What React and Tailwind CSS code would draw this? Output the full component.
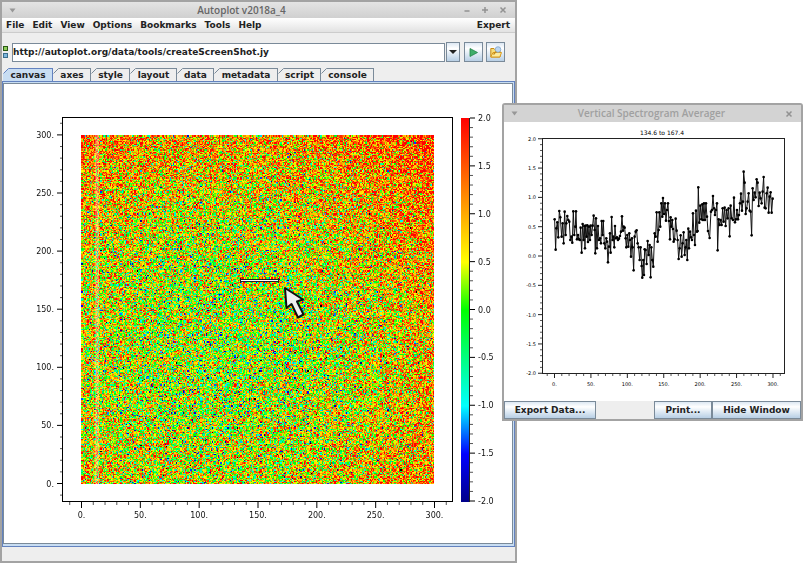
import React, { useLayoutEffect, useRef } from "react";

const STOPS = [
  [-2, 0, 0, 137],
  [-1.5, 0, 0, 255],
  [-1, 0, 255, 255],
  [0, 0, 255, 0],
  [0.5, 255, 255, 0],
  [2, 255, 0, 0],
];

function colorFor(v) {
  if (v < -2.2) return [0, 0, 0];
  if (v <= -2) return [0, 0, 137];
  for (let i = 1; i < STOPS.length; i++) {
    const a = STOPS[i - 1];
    const b = STOPS[i];
    if (v <= b[0]) {
      const t = (v - a[0]) / (b[0] - a[0]);
      return [1, 2, 3].map((k) => a[k] + (b[k] - a[k]) * t);
    }
  }
  return [255, 0, 0];
}

function makeRandom(seed) {
  let s = seed;
  return () => {
    s = (s + 0x6d2b79f5) | 0;
    let t = Math.imul(s ^ (s >>> 15), 1 | s);
    t = (t + Math.imul(t ^ (t >>> 7), 61 | t)) ^ t;
    return ((t ^ (t >>> 14)) >>> 0) / 4294967296;
  };
}

function Spectrogram() {
  const ref = useRef(null);
  useLayoutEffect(() => {
    const w = 353;
    const h = 349;
    const n = 300;
    const rnd = makeRandom(2018);
    const cells = [];
    for (let j = 0; j < n; j++) {
      for (let i = 0; i < n; i++) {
        const x = i / n - 0.4;
        const y = j / n - 0.62;
        const mean = 0.27 + 2 * (x * x + y * y);
        const g = Math.sqrt(-2 * Math.log(rnd() + 1e-9)) * Math.cos(2 * Math.PI * rnd());
        cells.push(colorFor(mean + g * 0.9));
      }
    }
    const ctx = ref.current.getContext("2d");
    const img = ctx.createImageData(w, h);
    for (let y = 0; y < h; y++) {
      for (let x = 0; x < w; x++) {
        const c = cells[Math.floor((y * n) / h) * n + Math.floor((x * n) / w)];
        const o = (y * w + x) * 4;
        img.data[o] = c[0];
        img.data[o + 1] = c[1];
        img.data[o + 2] = c[2];
        img.data[o + 3] = 255;
      }
    }
    ctx.putImageData(img, 0, 0);
    ctx.fillStyle = "rgba(255,255,255,0.28)";
    ctx.fillRect(14, 0, 4, h);
  }, []);
  return <canvas ref={ref} width="353" height="349" className="absolute left-[77px] top-[51px]" />;
}

const range = (a, b) => Array.from({ length: b - a + 1 }, (_, i) => a + i);

function MainPlot() {
  const px = (v) => 77.5 + v * 1.1767;
  const py = (v) => 399.5 - v * 1.162;
  const pz = (v) => 225.5 - v * 95.75;
  return (
    <div className="relative h-[459px] w-[507px]">
      <Spectrogram />
      <svg
        width="507"
        height="459"
        viewBox="0 0 507 459"
        className="relative block font-['DejaVu_Sans',sans-serif] text-[8px] font-normal"
        role="img"
        aria-label="Spectrogram with color bar"
      >
        <defs>
          <linearGradient id="bar" x1="0" y1="0" x2="0" y2="1">
            <stop offset="0" stopColor="#ff0000" />
            <stop offset="0.375" stopColor="#ffff00" />
            <stop offset="0.5" stopColor="#00ff00" />
            <stop offset="0.75" stopColor="#00ffff" />
            <stop offset="0.875" stopColor="#0000ff" />
            <stop offset="1" stopColor="#000089" />
          </linearGradient>
        </defs>
        <rect x="58.5" y="33.5" width="390" height="384" fill="none" stroke="#000" />
        {range(-1, 31).map((i) => (
          <g key={i} stroke={i % 5 ? "#555" : "#000"}>
            <line x1={px(i * 10)} x2={px(i * 10)} y1="418" y2={i % 5 ? 421 : 424} />
            <line y1={py(i * 10)} y2={py(i * 10)} x1="58" x2={i % 5 ? 56 : 53} />
          </g>
        ))}
        <g fill="#111">
          {range(0, 6).map((i) => (
            <React.Fragment key={i}>
              <text x={px(i * 50)} y="434" textAnchor="middle">{`${i * 50}.`}</text>
              <text x="50" y={py(i * 50) + 3} textAnchor="end">{`${i * 50}.`}</text>
            </React.Fragment>
          ))}
        </g>
        <rect x="457" y="34" width="9" height="384" fill="url(#bar)" />
        <line x1="465.5" x2="465.5" y1="34" y2="418" stroke="#222" />
        {range(-20, 20).map((i) => (
          <line key={i} x1="466" x2={i % 5 ? 469 : 471} y1={pz(i / 10)} y2={pz(i / 10)} stroke={i % 5 ? "#555" : "#000"} />
        ))}
        {range(-4, 4).map((i) => (
          <text key={i} x="474" y={pz(i / 2) + 3} fill="#111">
            {(i / 2).toFixed(1)}
          </text>
        ))}
        <path d="M236.500 194v5M274.500 194v5" stroke="#222" />
        <path d="M237 196.500h37" stroke="#222" strokeWidth="3" />
        <path d="M237 196.500h37" stroke="#fff" />
        <path
          d="M281 204L282.500 224L287.500 220L294 233.500L299.500 230.500L293 217.500L299 215.500Z"
          fill="#eee"
          stroke="#111"
          strokeWidth="2"
          strokeLinejoin="round"
        />
      </svg>
    </div>
  );
}

const TRACE =
  "43,178 46,269 48,205 51,187 54,232 57,153 60,172 64,230 67,190 70,250 73,155 76,225 78,190 81,168 84,180 87,185 90,240 93,230 96,248 99,154 102,225 105,200 107,154 110,238 113,225 116,238 119,240 121,203 124,278 127,192 130,240 132,198 134,265 136,197 139,230 141,196 143,246 146,200 149,240 151,197 154,225 157,197 160,167 163,210 165,280 167,175 170,265 173,198 176,240 179,235 182,250 184,183 187,225 189,183 192,250 195,265 198,235 200,245 203,307 206,260 209,220 211,278 214,171 217,240 219,230 222,262 224,198 227,235 230,232 233,240 236,236 239,228 242,215 245,169 248,212 250,200 253,203 256,235 258,262 261,225 264,260 267,220 269,240 272,290 275,235 277,262 280,331 283,230 286,215 289,211 292,250 295,262 298,300 301,262 304,318 306,353 309,300 311,345 313,268 316,270 319,312 322,243 325,285 328,255 331,352 333,262 336,300 339,320 343,220 346,230 349,157 352,245 355,210 357,157 360,200 363,130 366,170 368,114 371,162 374,130 377,182 380,150 383,130 386,183 389,238 391,172 393,200 396,180 398,207 400,245 403,238 406,176 409,212 412,240 415,297 418,265 421,226 424,290 427,250 430,217 433,285 436,262 438,240 441,300 444,206 446,265 449,215 452,232 455,240 458,160 461,225 464,255 467,152 470,215 472,213 474,82 477,188 480,137 483,178 486,133 488,180 491,130 494,180 497,130 500,170 503,213 508,234 512,155 515,150 518,108 521,145 524,165 527,150 530,130 532,271 535,178 538,195 541,180 544,195 547,145 550,185 553,143 556,198 559,150 562,175 565,145 568,229 571,137 574,175 578,180 581,113 584,187 587,178 590,150 593,178 596,165 599,130 602,101 605,152 608,125 610,35 613,68 616,162 619,145 622,125 625,100 628,152 631,155 634,226 637,85 640,120 643,98 646,112 649,58 652,68 655,138 658,98 661,115 664,130 667,95 670,51 673,143 676,145 679,100 682,83 685,158 688,110 691,97 694,158 697,116";

const POINTS = TRACE.split(" ").map((p) => {
  const [x, y] = p.split(",").map(Number);
  return [x / 3 + 36.3, y / 3 + 38];
});

function AveragePlot() {
  const px = (v) => 50.5 + v * 0.7283;
  const py = (v) => 134 - v * 58.625;
  return (
    <svg
      width="297"
      height="279"
      viewBox="0 0 297 279"
      className="block bg-white font-['DejaVu_Sans',sans-serif] text-[5px] font-normal"
      role="img"
      aria-label="Average along the vertical slice"
    >
      <rect x="38.5" y="16.500" width="242" height="235" fill="none" stroke="#222" />
      <text x="158" y="13" textAnchor="middle" className="text-[6px]" fill="#000">134.6 to 167.4</text>
      {range(-1, 31).map((i) => (
        <line key={i} x1={px(i * 10)} x2={px(i * 10)} y1="252" y2={i % 5 ? 254 : 256} stroke={i % 5 ? "#555" : "#222"} />
      ))}
      {range(-20, 20).map((i) => (
        <line key={i} y1={py(i / 10)} y2={py(i / 10)} x1="38" x2={i % 5 ? 36 : 34} stroke={i % 5 ? "#555" : "#222"} />
      ))}
      {range(0, 6).map((i) => (
        <text key={i} x={px(i * 50)} y="264" textAnchor="middle">{`${i * 50}.`}</text>
      ))}
      {range(-4, 4).map((i) => (
        <text key={i} x="32" y={py(i / 2) + 2} textAnchor="end">{(i / 2).toFixed(1)}</text>
      ))}
      <polyline points={POINTS.map((p) => p.join(",")).join(" ")} fill="none" stroke="#111" />
      {POINTS.map(([x, y], i) => (
        <circle key={i} cx={x} cy={y} r="1.3" />
      ))}
    </svg>
  );
}

function WindowGlyph({ d, label }) {
  return (
    <button aria-label={label} className="block">
      <svg width="8" height="8" viewBox="0 0 8 8" fill="none" stroke="#929292" strokeWidth="1.500">
        <path d={d} />
      </svg>
    </button>
  );
}

function MenuTriangle() {
  return (
    <button aria-label="Window menu" className="block">
      <svg width="7" height="5" viewBox="0 0 7 5">
        <path d="M0.500 0.500h6L3.500 4.500z" fill="#979797" />
      </svg>
    </button>
  );
}

const TABS = [
  ["canvas", "w-[50px]"],
  ["axes", "w-[38px]"],
  ["style", "w-[39px]"],
  ["layout", "w-[47px]"],
  ["data", "w-[37px]"],
  ["metadata", "w-[64px]"],
  ["script", "w-[43px]"],
  ["console", "w-[53px]"],
];

function Tab({ label, width, selected }) {
  const fill = selected ? "#c8ddf2" : "#eeeeee";
  const line = selected ? "#6382bf" : "#7a8a99";
  return (
    <button
      role="tab"
      aria-selected={selected}
      className={`relative h-[13px] border-t border-r pl-px text-center leading-[12px] ${width} ${
        selected ? "border-[#6382bf] bg-[#c8ddf2]" : "border-[#7a8a99] bg-[#eeeeee]"
      }`}
    >
      <svg width="6" height="13" viewBox="0 0 6 13" className="absolute -top-px left-0">
        <path d="M0 0H6L0 6Z" fill="#eeeeee" />
        <path d="M0.500 5.500L5.500 0.500" fill={fill} stroke={line} />
      </svg>
      {label}
    </button>
  );
}

const METAL = "border border-[#7a8a99] bg-linear-to-b from-[#dde8f3] via-white via-30% to-[#b8cfe5]";

function MainWindow() {
  return (
    <main className="flex h-screen min-h-[563px] w-[517px] flex-col border-2 border-[#a3a3a3] bg-[#eeeeee]">
      <header className="flex h-[16px] items-center bg-linear-to-b from-[#e4e4e4] to-[#d0d0d0] pr-[8px] pl-[7px]">
        <MenuTriangle />
        <h1 className="flex-1 pl-[4px] text-center font-['Open_Sans','Noto_Sans',sans-serif] text-[10px] leading-[16px] font-semibold text-[#666]">
          Autoplot v2018a_4
        </h1>
        <div className="flex gap-[10px]">
          <WindowGlyph label="Minimize" d="M1.500 5h5" />
          <WindowGlyph label="Maximize" d="M1 4h6M4 1v6" />
          <WindowGlyph label="Close" d="M1.500 1.500l5 5M6.500 1.500l-5 5" />
        </div>
      </header>
      <nav className="flex h-[15px] items-center gap-[8px] border-b border-[#cccccc] bg-linear-to-b from-white to-[#e2e2e2] pr-[5px] pl-[4px]">
        {["File", "Edit", "View", "Options", "Bookmarks", "Tools", "Help"].map((m) => (
          <button key={m}>{m}</button>
        ))}
        <button className="ml-auto">Expert</button>
      </nav>
      <div className="mt-[9px] flex h-[20px] items-center pr-[10px]">
        <div className="flex w-[8px] flex-col gap-[2px] pl-px">
          <span className="size-[5px] border border-[#2b5a14] bg-[#8fce5b]" />
          <span className="size-[5px] border border-[#3a6c8c] bg-[#7cb6dc]" />
        </div>
        <input
          aria-label="Address"
          defaultValue="http://autoplot.org/data/tools/createScreenShot.jy"
          className="ml-[2px] h-[19px] min-w-0 flex-1 border border-[#7a8a99] bg-white outline-none"
        />
        <button aria-label="Recent addresses" className={`ml-px flex h-[20px] w-[14px] items-center justify-center ${METAL}`}>
          <svg width="8" height="4" viewBox="0 0 8 4">
            <path d="M0 0h8L4 4z" fill="#222" />
          </svg>
        </button>
        <button aria-label="Plot" className={`ml-[4px] flex h-[20px] w-[19px] items-center justify-center ${METAL}`}>
          <svg width="9" height="9" viewBox="0 0 9 9">
            <path d="M1 0.500L8.500 4.500L1 8.500Z" fill="#3fae6a" stroke="#23834a" strokeWidth="0.8" />
          </svg>
        </button>
        <button aria-label="Browse" className={`ml-[3px] flex h-[20px] w-[19px] items-center justify-center ${METAL}`}>
          <svg width="12" height="12" viewBox="0 0 12 12">
            <path d="M0.800 11V2.500H4L5 3.800H10V11Z" fill="#f7dd7a" stroke="#c68a16" />
            <path d="M0.800 11L3 6.500H11.500L9.800 11Z" fill="#fdeb9c" stroke="#d99a1c" />
            <circle cx="8" cy="3.500" r="2.800" fill="#bcd6f0" stroke="#7fa4cc" strokeWidth="0.8" />
            <path d="M6 5.500L3.500 8.500" stroke="#c68a16" strokeWidth="1.200" />
          </svg>
        </button>
      </div>
      <div role="tablist" className="mt-[6px] flex pl-px">
        {TABS.map(([label, width], i) => (
          <Tab key={label} label={label} width={width} selected={i === 0} />
        ))}
      </div>
      <section className="flex flex-1 flex-col border border-[#6382bf] bg-[#c8ddf2] pt-px pr-px pb-[2px]">
        <div className="flex-1 overflow-hidden border border-[#7a8a99] bg-white">
          <MainPlot />
        </div>
      </section>
      <footer className="h-[14px]" />
    </main>
  );
}

function AveragerWindow() {
  return (
    <aside className="absolute top-[103px] left-[502px] w-[301px] rounded-t-[3px] border-2 border-[#a3a3a3] bg-[#eeeeee]">
      <header className="flex h-[17px] items-center bg-[#d3d3d3] pr-[8px] pl-[7px]">
        <MenuTriangle />
        <h2 className="flex-1 text-center font-['Open_Sans','Noto_Sans',sans-serif] text-[10px] leading-[17px] font-semibold text-[#a0a0a0]">
          Vertical Spectrogram Averager
        </h2>
        <WindowGlyph label="Close averager" d="M1.500 1.500l5 5M6.500 1.500l-5 5" />
      </header>
      <AveragePlot />
      <div className="flex h-[18px]">
        <button className={`w-[92px] ${METAL}`}>Export Data...</button>
        <button className={`ml-auto w-[58px] ${METAL}`}>Print...</button>
        <button className={`w-[89px] ${METAL}`}>Hide Window</button>
      </div>
    </aside>
  );
}

export default function App() {
  return (
    <div className="relative min-h-screen overflow-hidden bg-white font-['DejaVu_Sans',sans-serif] text-[9px] leading-[12px] font-bold text-[#222]">
      <MainWindow />
      <AveragerWindow />
    </div>
  );
}
